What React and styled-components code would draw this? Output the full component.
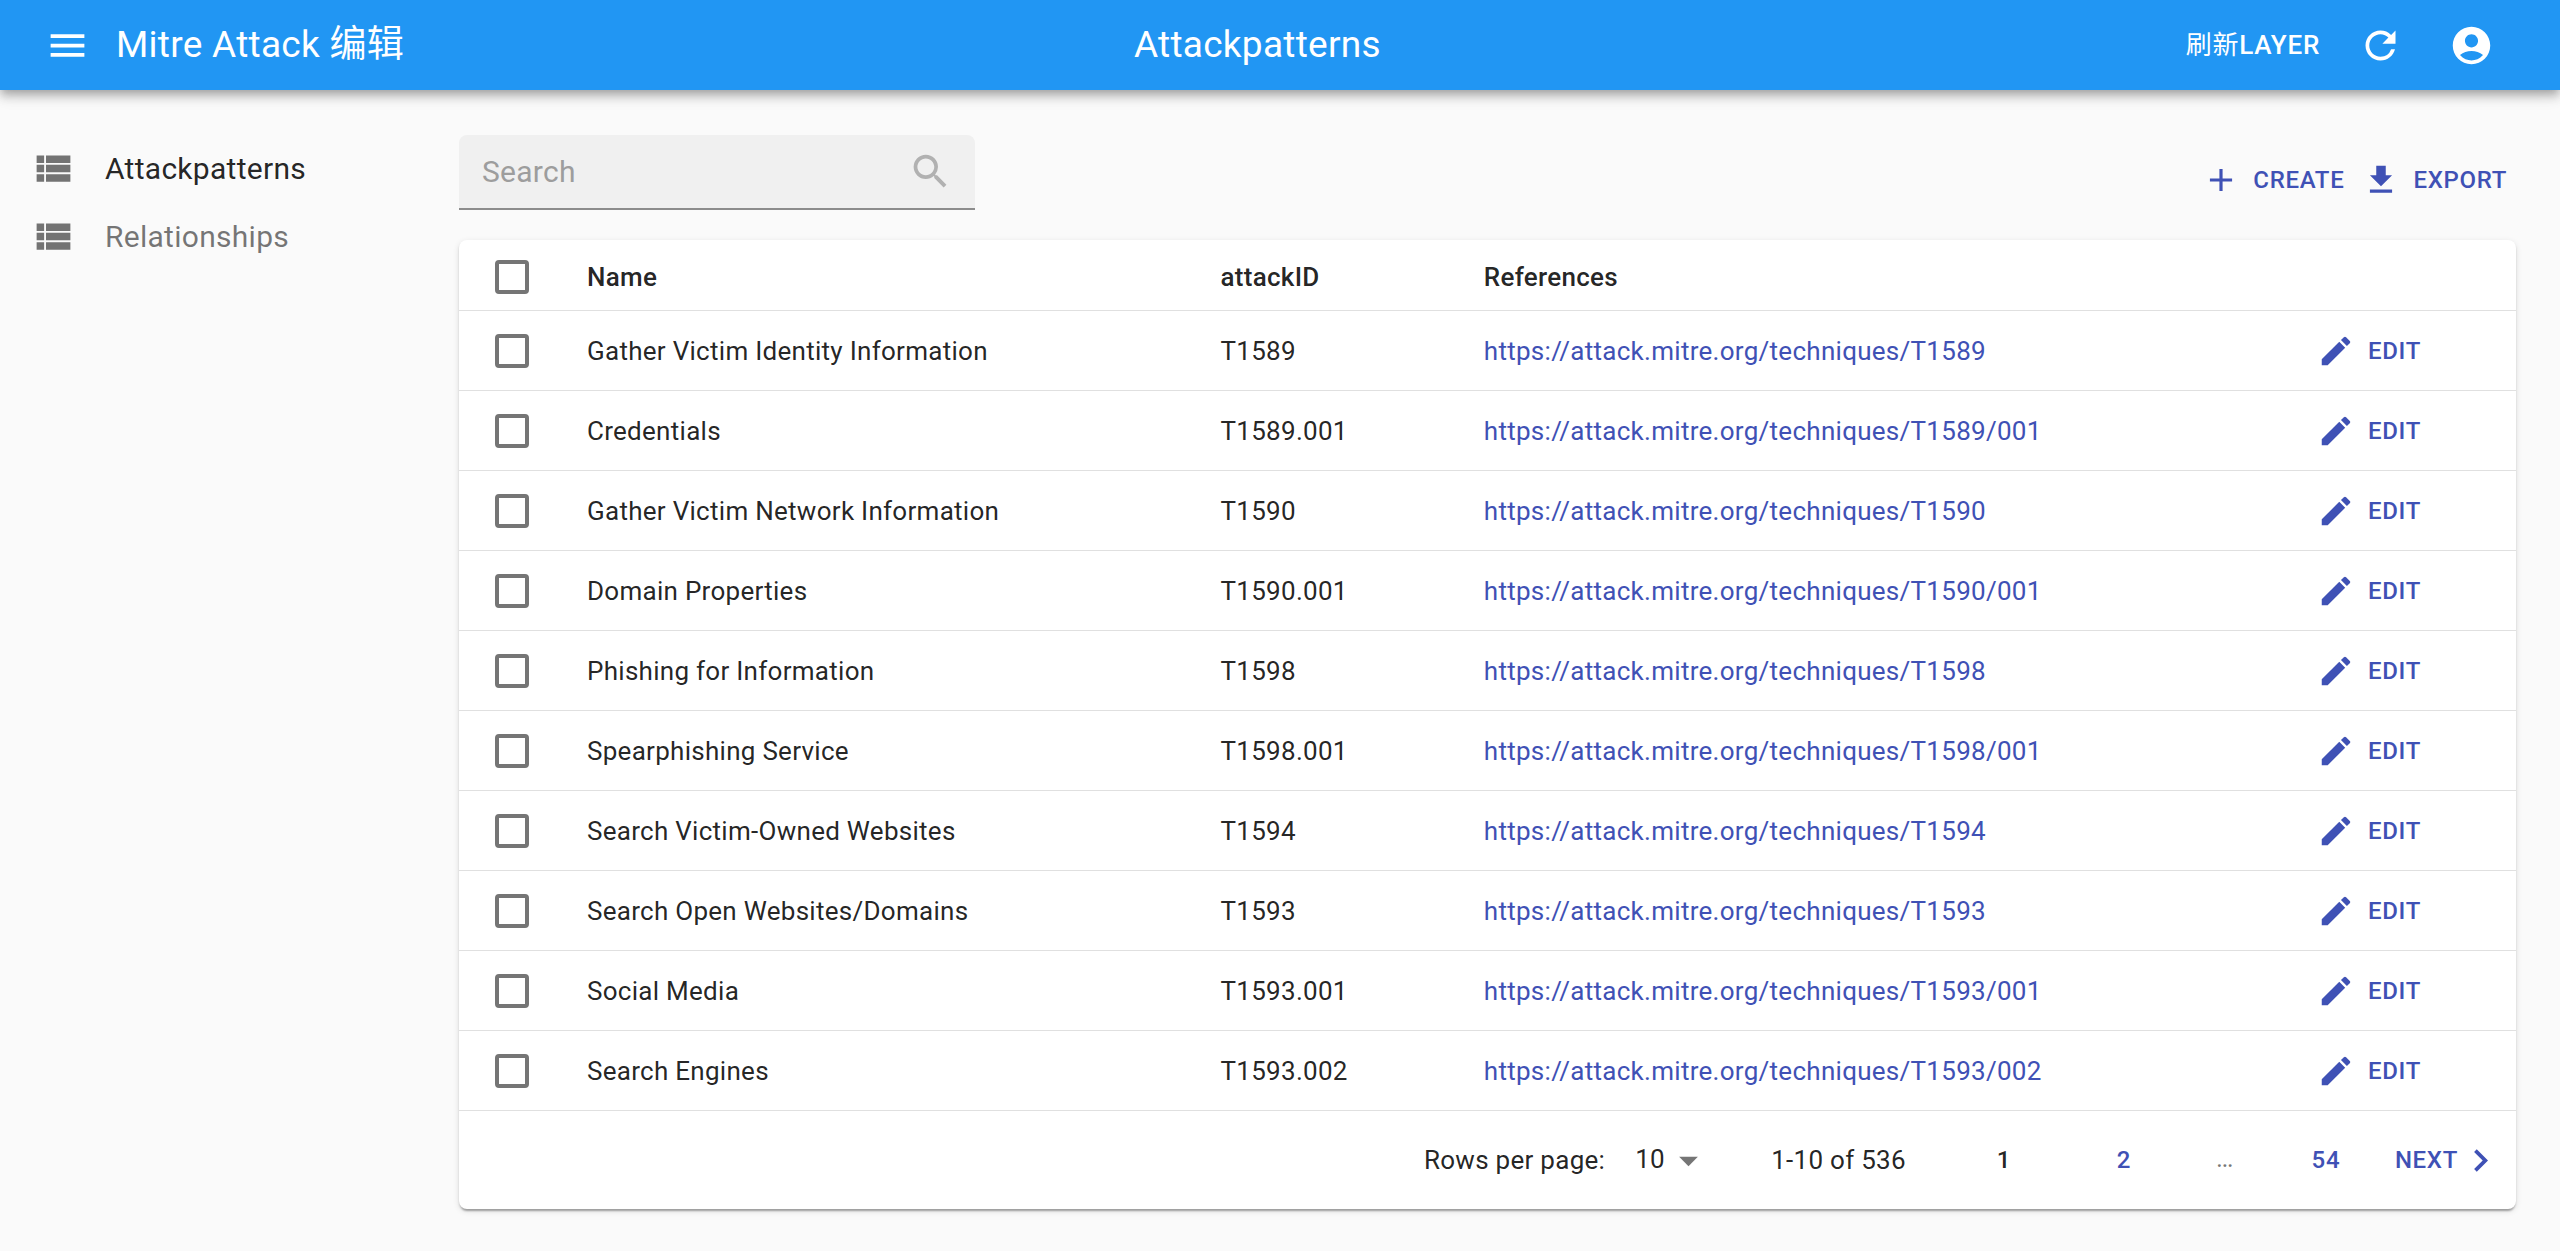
import React, { useState } from "react";
import styled, { createGlobalStyle } from "styled-components";
import {
  MdMenu,
  MdRefresh,
  MdAccountCircle,
  MdViewList,
  MdSearch,
  MdAdd,
  MdGetApp,
  MdCreate,
  MdArrowDropDown,
  MdChevronRight,
} from "react-icons/md";

const GlobalStyle = createGlobalStyle`
  *, *::before, *::after { box-sizing: border-box; }
  body {
    margin: 0;
    background: #fafafa;
    color: rgba(0, 0, 0, 0.87);
    font-family: Roboto, "Noto Sans CJK SC", sans-serif;
    font-size: 26px;
    line-height: 38px;
    letter-spacing: 0.01071em;
  }
  button, input, select {
    margin: 0;
    font: inherit;
    letter-spacing: inherit;
    color: inherit;
  }
  svg { display: block; flex: none; }
`;

const Bar = styled.header`
  display: flex;
  align-items: center;
  height: 90px;
  padding: 0 43px 0 22px;
  background: #2196f3;
  color: #fff;
  box-shadow: 0 4px 8px -2px rgba(0, 0, 0, 0.2), 0 8px 9px 0 rgba(0, 0, 0, 0.14),
    0 2px 19px 0 rgba(0, 0, 0, 0.12);
`;

const IconButton = styled.button`
  display: flex;
  padding: 23px;
  border: 0;
  background: none;
  cursor: pointer;
`;

const Heading = styled.h1`
  margin: 0;
  font-size: 37px;
  line-height: 60px;
  font-weight: 400;
  letter-spacing: 0.0075em;
  white-space: nowrap;
`;

const Brand = styled(Heading)`
  padding-left: 3px;
`;

const BarTitle = styled(Heading)`
  flex: 1;
  padding-right: 60px;
  text-align: center;
`;

const TextButton = styled.button`
  display: inline-flex;
  align-items: center;
  justify-content: ${(p) => (p.$wide ? "center" : "flex-start")};
  gap: ${(p) => p.$gap || 0}px;
  min-width: ${(p) => (p.$wide ? "120px" : "0")};
  padding: 8px ${(p) => (p.$large ? 15 : 9)}px;
  border: 0;
  border-radius: 8px;
  background: none;
  color: ${(p) => p.$color || "#3f51b5"};
  font-size: ${(p) => (p.$large ? 26 : 24)}px;
  font-weight: 500;
  line-height: 44px;
  letter-spacing: 0.02857em;
  text-transform: uppercase;
  white-space: nowrap;
  cursor: pointer;
`;

const Regular = styled.span`
  font-weight: 400;
`;

const Body = styled.div`
  display: flex;
  align-items: flex-start;
`;

const Sidebar = styled.nav`
  flex: none;
  display: flex;
  flex-direction: column;
  width: 459px;
  padding-top: 44px;
`;

const MenuLink = styled.a`
  display: flex;
  align-items: center;
  gap: 29px;
  height: 68px;
  padding: 0 31px;
  color: ${(p) => (p.$active ? "rgba(0, 0, 0, 0.87)" : "rgba(0, 0, 0, 0.54)")};
  font-size: 30px;
  line-height: 45px;
  text-decoration: none;

  svg { color: rgba(0, 0, 0, 0.54); }
`;

const Main = styled.main`
  flex: 1;
  min-width: 0;
  padding: 45px 44px 30px 0;
`;

const Toolbar = styled.div`
  display: flex;
  align-items: flex-start;
  justify-content: space-between;
  margin-bottom: 30px;
`;

const SearchBox = styled.label`
  display: flex;
  align-items: center;
  width: 516px;
  height: 75px;
  padding: 0 22px 0 23px;
  border-bottom: 2px solid #8c8c8c;
  border-radius: 8px 8px 0 0;
  background: #f0f0f0;
  color: #b1b1b1;
`;

const SearchInput = styled.input`
  flex: 1;
  min-width: 0;
  padding: 0;
  border: 0;
  outline: 0;
  background: none;
  color: rgba(0, 0, 0, 0.87);
  font-size: 30px;
  line-height: 45px;

  &::placeholder { color: #9d9d9d; opacity: 1; }
`;

const Actions = styled.div`
  display: flex;
  padding-top: 15px;
`;

const Card = styled.section`
  border-radius: 8px;
  background: #fff;
  box-shadow: 0 4px 2px -2px rgba(0, 0, 0, 0.2), 0 2px 2px 0 rgba(0, 0, 0, 0.14),
    0 2px 6px 0 rgba(0, 0, 0, 0.12);
`;

const Table = styled.table`
  width: 100%;
  table-layout: fixed;
  border-collapse: separate;
  border-spacing: 0;
`;

const Col = styled.col`
  width: ${(p) => p.$width};
`;

const HeadCell = styled.th`
  height: 71px;
  padding: 3px 30px 0;
  border-bottom: 1px solid #e0e0e0;
  font-weight: 500;
  text-align: left;
`;

const Cell = styled.td`
  height: 80px;
  padding: 0 30px;
  border-bottom: 1px solid #e0e0e0;
  white-space: nowrap;
`;

const Checkbox = styled.input.attrs({ type: "checkbox" })`
  display: block;
  appearance: none;
  width: 34px;
  height: 34px;
  margin-left: 6px;
  border: 4px solid #757575;
  border-radius: 4px;

  &:checked { background: #3f51b5; border-color: #3f51b5; }
`;

const RefLink = styled.a`
  color: #3f51b5;
  text-decoration: none;
`;

const Pager = styled.footer`
  display: flex;
  align-items: center;
  justify-content: flex-end;
  height: 98px;
  padding-right: 4px;
`;

const RowsLabel = styled.label`
  margin-right: 30px;
`;

const SelectWrap = styled.div`
  position: relative;
  margin-right: 60px;

  svg {
    position: absolute;
    right: 0;
    top: 0;
    color: rgba(0, 0, 0, 0.54);
    pointer-events: none;
  }
`;

const RowsSelect = styled.select`
  display: block;
  width: 76px;
  height: 45px;
  padding: 0 0 2px;
  border: 0;
  outline: 0;
  appearance: none;
  background: none;
`;

const Range = styled.span`
  margin-right: 38px;
`;

const Ellipsis = styled.span`
  width: 82px;
  padding-bottom: 4px;
  color: rgba(0, 0, 0, 0.54);
  text-align: center;
`;

const rows = [
  ["Gather Victim Identity Information", "T1589"],
  ["Credentials", "T1589.001"],
  ["Gather Victim Network Information", "T1590"],
  ["Domain Properties", "T1590.001"],
  ["Phishing for Information", "T1598"],
  ["Spearphishing Service", "T1598.001"],
  ["Search Victim-Owned Websites", "T1594"],
  ["Search Open Websites/Domains", "T1593"],
  ["Social Media", "T1593.001"],
  ["Search Engines", "T1593.002"],
];

function Row({ name, id, checked, onToggle }) {
  const url = `https://attack.mitre.org/techniques/${id.replace(".", "/")}`;
  return (
    <tr>
      <Cell>
        <Checkbox aria-label={`Select ${name}`} checked={checked} onChange={onToggle} />
      </Cell>
      <Cell>{name}</Cell>
      <Cell>{id}</Cell>
      <Cell>
        <RefLink href={url}>{url}</RefLink>
      </Cell>
      <Cell>
        <TextButton type="button" $gap={13}>
          <MdCreate size={38} />
          Edit
        </TextButton>
      </Cell>
    </tr>
  );
}

export default function App() {
  const [selected, setSelected] = useState([]);
  const toggle = (id) =>
    setSelected((s) => (s.includes(id) ? s.filter((x) => x !== id) : [...s, id]));
  const all = selected.length === rows.length;

  return (
    <>
      <GlobalStyle />
      <Bar>
        <IconButton type="button" aria-label="Menu">
          <MdMenu size={45} />
        </IconButton>
        <Brand as="span">Mitre Attack 编辑</Brand>
        <BarTitle>Attackpatterns</BarTitle>
        <TextButton type="button" $large $color="#fff">
          <Regular>刷新</Regular>Layer
        </TextButton>
        <IconButton type="button" aria-label="Refresh">
          <MdRefresh size={45} />
        </IconButton>
        <IconButton type="button" aria-label="Profile">
          <MdAccountCircle size={45} />
        </IconButton>
      </Bar>
      <Body>
        <Sidebar>
          <MenuLink href="#attackpatterns" $active>
            <MdViewList size={45} />
            Attackpatterns
          </MenuLink>
          <MenuLink href="#relationships">
            <MdViewList size={45} />
            Relationships
          </MenuLink>
        </Sidebar>
        <Main>
          <Toolbar>
            <SearchBox>
              <SearchInput type="text" placeholder="Search" aria-label="Search" />
              <MdSearch size={45} />
            </SearchBox>
            <Actions>
              <TextButton type="button" $gap={13}>
                <MdAdd size={38} />
                Create
              </TextButton>
              <TextButton type="button" $gap={13}>
                <MdGetApp size={38} />
                Export
              </TextButton>
            </Actions>
          </Toolbar>
          <Card>
            <Table>
              <colgroup>
                <Col $width="98px" />
                <Col $width="30.8%" />
                <Col $width="12.8%" />
                <Col />
                <Col $width="238px" />
              </colgroup>
              <thead>
                <tr>
                  <HeadCell>
                    <Checkbox
                      aria-label="Select all"
                      checked={all}
                      onChange={() => setSelected(all ? [] : rows.map((r) => r[1]))}
                    />
                  </HeadCell>
                  <HeadCell>Name</HeadCell>
                  <HeadCell>attackID</HeadCell>
                  <HeadCell>References</HeadCell>
                  <HeadCell />
                </tr>
              </thead>
              <tbody>
                {rows.map(([name, id]) => (
                  <Row
                    key={id}
                    name={name}
                    id={id}
                    checked={selected.includes(id)}
                    onToggle={() => toggle(id)}
                  />
                ))}
              </tbody>
            </Table>
            <Pager>
              <RowsLabel htmlFor="rows-per-page">Rows per page:</RowsLabel>
              <SelectWrap>
                <RowsSelect id="rows-per-page" defaultValue="10">
                  <option>10</option>
                  <option>25</option>
                  <option>50</option>
                </RowsSelect>
                <MdArrowDropDown size={45} />
              </SelectWrap>
              <Range>1-10 of 536</Range>
              <TextButton type="button" $wide $color="rgba(0, 0, 0, 0.87)">
                1
              </TextButton>
              <TextButton type="button" $wide>
                2
              </TextButton>
              <Ellipsis>…</Ellipsis>
              <TextButton type="button" $wide>
                54
              </TextButton>
              <TextButton type="button">
                Next
                <MdChevronRight size={45} />
              </TextButton>
            </Pager>
          </Card>
        </Main>
      </Body>
    </>
  );
}
